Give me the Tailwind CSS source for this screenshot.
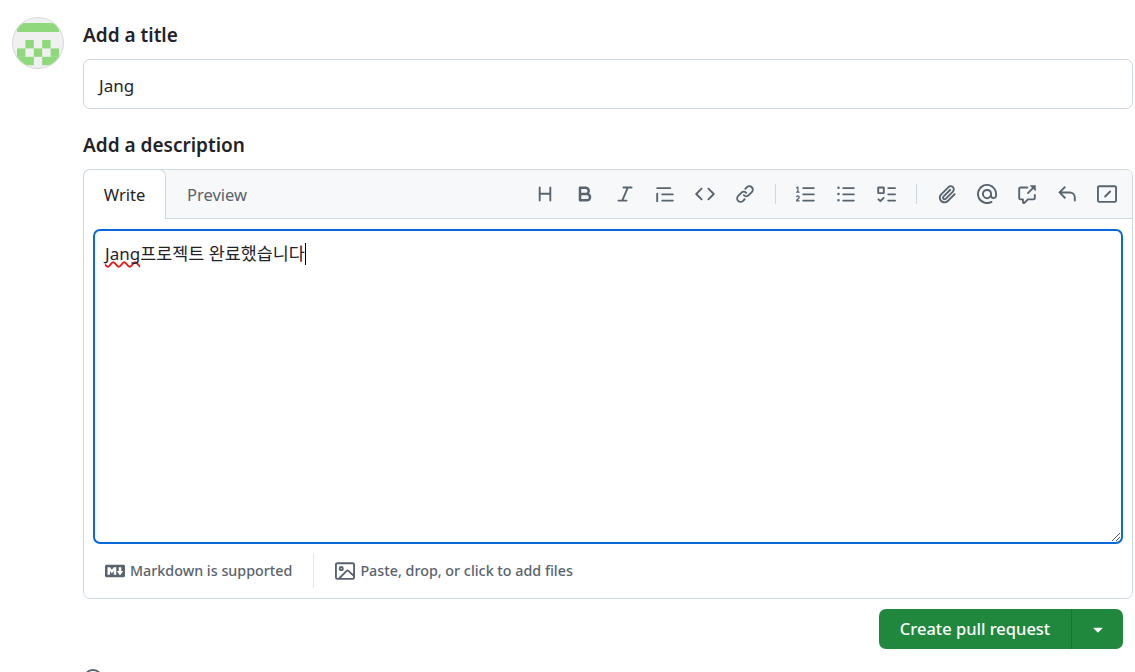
<!DOCTYPE html>
<html lang="en">
<head>
    <meta charset="UTF-8">
    <title>Open a pull request</title>
    <script src="https://cdn.jsdelivr.net/npm/@tailwindcss/browser@4"></script>
</head>
<body class="bg-white h-[672px] overflow-hidden text-[#1f2328] font-['Noto_Sans','Noto_Sans_CJK_KR',sans-serif]">
<div class="flex pl-3 pr-0.5 pt-[17px]">
    <!-- Avatar -->
    <div class="w-[52px] h-[52px] shrink-0 rounded-full border border-[#d9d9d9] bg-[#f0f0f0] overflow-hidden">
        <svg class="w-full h-full" viewBox="0 0 50 50" fill="#8fd97c">
            <rect x="4" y="5" width="42" height="9"/>
            <rect x="12.4" y="22" width="8.4" height="8.4"/>
            <rect x="29.2" y="22" width="8.4" height="8.4"/>
            <rect x="4" y="30.4" width="8.4" height="8.4"/>
            <rect x="20.8" y="30.4" width="8.4" height="8.4"/>
            <rect x="37.6" y="30.4" width="8.4" height="8.4"/>
            <rect x="4" y="38.8" width="16.8" height="8.4"/>
            <rect x="29.2" y="38.8" width="16.8" height="8.4"/>
        </svg>
    </div>

    <div class="ml-[19px] flex-1">
        <!-- Title -->
        <h2 class="text-[19px] leading-[36px] font-semibold">Add a title</h2>
        <div class="mt-[6px] h-[50px] border border-[#d1d9e0] rounded-[7px] px-[15px] pt-[3px] flex items-center text-[17px]">Jang</div>

        <!-- Description -->
        <h2 class="mt-[18px] text-[19px] leading-[36px] font-semibold">Add a description</h2>
        <div class="mt-1.5 h-[430px] border border-[#d1d9e0] rounded-[7px] flex flex-col">
            <div class="relative h-[49px] shrink-0 flex bg-[#f6f8fa] border-b border-[#d1d9e0] rounded-t-[7px]">
                <div class="w-[83px] h-[50px] -ml-px -mt-px pt-[2px] bg-white border border-[#d1d9e0] border-b-0 rounded-t-[7px] flex items-center justify-center text-[16.5px]">Write</div>
                <div class="w-[102px] pt-[2px] flex items-center justify-center text-[16.5px] text-[#59636e]">Preview</div>
                <!-- Toolbar -->
                <div class="ml-auto mr-[15px] flex items-center text-[#59636e]">
                    <svg class="w-5 h-5 mr-5" viewBox="0 0 16 16" fill="currentColor"><path d="M3.75 2a.75.75 0 0 1 .75.75V7h7V2.75a.75.75 0 0 1 1.5 0v10.5a.75.75 0 0 1-1.5 0V8.5h-7v4.75a.75.75 0 0 1-1.5 0V2.75A.75.75 0 0 1 3.75 2Z"/></svg>
                    <svg class="w-5 h-5 mr-5" viewBox="0 0 16 16" fill="currentColor"><path d="M4 2h4.5a3.501 3.501 0 0 1 2.852 5.53A3.499 3.499 0 0 1 9.5 14H4a1 1 0 0 1-1-1V3a1 1 0 0 1 1-1Zm1 7v3h4.5a1.5 1.5 0 0 0 0-3Zm3.5-2a1.5 1.5 0 0 0 0-3H5v3Z"/></svg>
                    <svg class="w-5 h-5 mr-5" viewBox="0 0 16 16" fill="currentColor"><path d="M6 2.75A.75.75 0 0 1 6.75 2h6.5a.75.75 0 0 1 0 1.5h-2.505l-3.858 9H9.25a.75.75 0 0 1 0 1.5h-6.5a.75.75 0 0 1 0-1.5h2.505l3.858-9H6.75A.75.75 0 0 1 6 2.75Z"/></svg>
                    <svg class="w-5 h-5 mr-5" viewBox="0 0 16 16" fill="currentColor"><path d="M1.75 2.5h10.5a.75.75 0 0 1 0 1.5H1.75a.75.75 0 0 1 0-1.5Zm4 5h8.5a.75.75 0 0 1 0 1.5h-8.5a.75.75 0 0 1 0-1.5Zm0 5h8.5a.75.75 0 0 1 0 1.5h-8.5a.75.75 0 0 1 0-1.5ZM2.5 7.75v6a.75.75 0 0 1-1.5 0v-6a.75.75 0 0 1 1.5 0Z"/></svg>
                    <svg class="w-5 h-5 mr-5" viewBox="0 0 16 16" fill="currentColor"><path d="m11.28 3.22 4.25 4.25a.75.75 0 0 1 0 1.06l-4.25 4.25a.749.749 0 0 1-1.275-.326.749.749 0 0 1 .215-.734L13.94 8l-3.72-3.72a.749.749 0 0 1 .326-1.275.749.749 0 0 1 .734.215Zm-6.56 0a.751.751 0 0 1 1.042.018.751.751 0 0 1 .018 1.042L2.06 8l3.72 3.72a.749.749 0 0 1-.326 1.275.749.749 0 0 1-.734-.215L.47 8.53a.75.75 0 0 1 0-1.06Z"/></svg>
                    <svg class="w-5 h-5" viewBox="0 0 16 16" fill="currentColor"><path d="m7.775 3.275 1.25-1.25a3.5 3.5 0 1 1 4.95 4.95l-2.5 2.5a3.5 3.5 0 0 1-4.95 0 .751.751 0 0 1 .018-1.042.751.751 0 0 1 1.042-.018 1.998 1.998 0 0 0 2.83 0l2.5-2.5a2.002 2.002 0 0 0-2.83-2.83l-1.25 1.25a.751.751 0 0 1-1.042-.018.751.751 0 0 1-.018-1.042Zm-4.69 9.64a1.998 1.998 0 0 0 2.83 0l1.25-1.25a.751.751 0 0 1 1.042.018.751.751 0 0 1 .018 1.042l-1.25 1.25a3.5 3.5 0 1 1-4.95-4.95l2.5-2.5a3.5 3.5 0 0 1 4.95 0 .751.751 0 0 1-.018 1.042.751.751 0 0 1-1.042.018 1.998 1.998 0 0 0-2.83 0l-2.5 2.5a1.998 1.998 0 0 0 0 2.83Z"/></svg>
                    <div class="w-px h-[20px] bg-[#d1d9e0] mx-[20px]"></div>
                    <svg class="w-5 h-5 mr-5" viewBox="0 0 16 16" fill="currentColor"><path d="M5 3.25a.75.75 0 0 1 .75-.75h8.5a.75.75 0 0 1 0 1.5h-8.5A.75.75 0 0 1 5 3.25Zm0 5a.75.75 0 0 1 .75-.75h8.5a.75.75 0 0 1 0 1.5h-8.5A.75.75 0 0 1 5 8.25Zm0 5a.75.75 0 0 1 .75-.75h8.5a.75.75 0 0 1 0 1.5h-8.5a.75.75 0 0 1-.75-.75ZM.924 10.32a.5.5 0 0 1-.851-.525l.001-.001.001-.002.002-.004.007-.011c.097-.144.215-.273.348-.384.228-.19.588-.392 1.068-.392.468 0 .858.181 1.126.484.259.294.377.673.377 1.038 0 .987-.686 1.495-1.156 1.845l-.047.035c-.303.225-.522.4-.654.597h1.357a.5.5 0 0 1 0 1H.5a.5.5 0 0 1-.5-.5c0-1.005.692-1.52 1.167-1.875l.035-.025c.531-.396.8-.625.8-1.078a.57.57 0 0 0-.128-.376C1.806 10.068 1.695 10 1.5 10a.658.658 0 0 0-.429.163.835.835 0 0 0-.144.153ZM2.003 2.5V6h.503a.5.5 0 0 1 0 1H.5a.5.5 0 0 1 0-1h.503V3.308l-.28.14a.5.5 0 0 1-.446-.895l1.003-.5a.5.5 0 0 1 .723.447Z"/></svg>
                    <svg class="w-5 h-5 mr-5" viewBox="0 0 16 16" fill="currentColor"><path d="M5.75 2.5h8.5a.75.75 0 0 1 0 1.5h-8.5a.75.75 0 0 1 0-1.5Zm0 5h8.5a.75.75 0 0 1 0 1.5h-8.5a.75.75 0 0 1 0-1.5Zm0 5h8.5a.75.75 0 0 1 0 1.5h-8.5a.75.75 0 0 1 0-1.5ZM2 14a1 1 0 1 1 0-2 1 1 0 0 1 0 2Zm1-6a1 1 0 1 1-2 0 1 1 0 0 1 2 0ZM2 4a1 1 0 1 1 0-2 1 1 0 0 1 0 2Z"/></svg>
                    <svg class="w-5 h-5" viewBox="0 0 16 16" fill="currentColor"><path d="M2 2h4a1 1 0 0 1 1 1v4a1 1 0 0 1-1 1H2a1 1 0 0 1-1-1V3a1 1 0 0 1 1-1Zm4.655 8.595a.75.75 0 0 1 0 1.06L4.03 14.28a.75.75 0 0 1-1.06 0l-1.5-1.5a.749.749 0 0 1 .326-1.275.749.749 0 0 1 .734.215l.97.97 2.095-2.095a.75.75 0 0 1 1.06 0ZM9.75 2.5h5.5a.75.75 0 0 1 0 1.5h-5.5a.75.75 0 0 1 0-1.5Zm0 5h5.5a.75.75 0 0 1 0 1.5h-5.5a.75.75 0 0 1 0-1.5Zm0 5h5.5a.75.75 0 0 1 0 1.5h-5.5a.75.75 0 0 1 0-1.5Zm-7.25-9v3h3v-3Z"/></svg>
                    <div class="w-px h-[20px] bg-[#d1d9e0] mx-[20px]"></div>
                    <svg class="w-5 h-5 mr-5" viewBox="0 0 16 16" fill="currentColor"><path d="M12.212 3.02a1.753 1.753 0 0 0-2.478.003l-5.83 5.83a3.007 3.007 0 0 0-.88 2.127c0 .795.315 1.551.88 2.116.567.567 1.333.89 2.126.89.79 0 1.548-.321 2.116-.89l5.48-5.48a.75.75 0 0 1 1.061 1.06l-5.48 5.48a4.492 4.492 0 0 1-3.177 1.33c-1.2 0-2.345-.487-3.187-1.33a4.483 4.483 0 0 1-1.32-3.177c0-1.195.475-2.341 1.32-3.186l5.83-5.83a3.25 3.25 0 0 1 5.553 2.297c0 .863-.343 1.691-.953 2.301L7.439 12.39c-.375.377-.884.59-1.416.593a1.998 1.998 0 0 1-1.412-.593 1.992 1.992 0 0 1 0-2.828l5.48-5.48a.751.751 0 0 1 1.042.018.751.751 0 0 1 .018 1.042l-5.48 5.48a.492.492 0 0 0 0 .707.499.499 0 0 0 .352.154.51.51 0 0 0 .356-.154l5.833-5.827a1.755 1.755 0 0 0 0-2.481Z"/></svg>
                    <svg class="w-5 h-5 mr-5" viewBox="0 0 16 16" fill="currentColor"><path d="M4.75 2.37a6.501 6.501 0 0 0 6.5 11.26.75.75 0 0 1 .75 1.298A7.999 7.999 0 0 1 .989 4.148 8 8 0 0 1 16 7.75v1.5a2.75 2.75 0 0 1-5.072 1.475 3.999 3.999 0 0 1-6.65-4.19A4 4 0 0 1 12 8v1.25a1.25 1.25 0 0 0 2.5 0V7.867a6.5 6.5 0 0 0-9.75-5.496ZM10.5 8a2.5 2.5 0 1 0-5 0 2.5 2.5 0 0 0 5 0Z"/></svg>
                    <svg class="w-5 h-5 mr-5" viewBox="0 0 16 16" fill="currentColor"><path d="M2.75 3.5a.25.25 0 0 0-.25.25v7.5c0 .138.112.25.25.25h2a.75.75 0 0 1 .75.75v2.19l2.72-2.72a.749.749 0 0 1 .53-.22h4.5a.25.25 0 0 0 .25-.25v-2.5a.75.75 0 0 1 1.5 0v2.5A1.75 1.75 0 0 1 13.25 13H9.06l-2.573 2.573A1.458 1.458 0 0 1 4 14.543V13H2.75A1.75 1.75 0 0 1 1 11.25v-7.5C1 2.784 1.784 2 2.75 2h5.5a.75.75 0 0 1 0 1.5ZM10.604 1h4.146a.25.25 0 0 1 .25.25v4.146a.25.25 0 0 1-.427.177L13.03 4.03 9.28 7.78a.751.751 0 0 1-1.042-.018.751.751 0 0 1-.018-1.042l3.75-3.75-1.543-1.543A.25.25 0 0 1 10.604 1Z"/></svg>
                    <svg class="w-5 h-5 mr-5" viewBox="0 0 16 16" fill="currentColor"><path d="M6.78 1.97a.75.75 0 0 1 0 1.06L3.81 6h6.44A4.75 4.75 0 0 1 15 10.75v2.5a.75.75 0 0 1-1.5 0v-2.5a3.25 3.25 0 0 0-3.25-3.25H3.81l2.97 2.97a.749.749 0 0 1-.326 1.275.749.749 0 0 1-.734-.215L1.47 7.28a.75.75 0 0 1 0-1.06l4.25-4.25a.75.75 0 0 1 1.06 0Z"/></svg>
                    <svg class="w-5 h-5" viewBox="0 0 16 16" fill="currentColor"><path d="M1.75 1h12.5c.966 0 1.75.784 1.75 1.75v10.5A1.75 1.75 0 0 1 14.25 15H1.75A1.75 1.75 0 0 1 0 13.25V2.75C0 1.784.784 1 1.75 1ZM1.5 2.75v10.5c0 .138.112.25.25.25h12.5a.25.25 0 0 0 .25-.25V2.75a.25.25 0 0 0-.25-.25H1.75a.25.25 0 0 0-.25.25Z"/><path d="M9.97 5.47a.75.75 0 0 1 1.06 1.06l-4 4a.75.75 0 0 1-1.06-1.06Z"/></svg>
                </div>
            </div>

            <!-- Editor -->
            <div class="relative ml-[9px] mr-[9px] mt-[10px] h-[315px] border-2 border-[#0969da] rounded-[7px] pl-[10px] pr-[9px] py-[10px] text-[17px] leading-[25px]">
                <span class="underline decoration-wavy decoration-[#e02020] decoration-[1.5px] [text-decoration-skip-ink:none]">Jang</span><span class="text-[17.4px]">프로젝트 완료했습니다</span><span class="inline-block w-px h-[22px] bg-black align-[-5px]"></span>
                <svg class="absolute right-0 bottom-0 w-3 h-3" viewBox="0 0 12 12" stroke="#555" fill="none"><path d="M11 3 3 11M11 7 7 11"/></svg>
            </div>

            <!-- Editor footer -->
            <div class="flex items-center h-[35px] mt-[9px] text-[14.3px] text-[#59636e]">
                <div class="flex items-center pl-[21px] pr-[21px] h-full font-medium">
                    <svg class="w-5 h-5 mr-[5px]" viewBox="0 0 16 16" fill="currentColor"><path d="M14.85 3c.63 0 1.15.52 1.14 1.15v7.7c0 .63-.51 1.15-1.15 1.15H1.15C.52 13 0 12.48 0 11.84V4.15C0 3.52.52 3 1.15 3ZM9 11V5H7L5.5 7 4 5H2v6h2V8l1.5 1.92L7 8v3Zm2.99.5L14.5 8H13V5h-2v3H9.5Z"/></svg>
                    <span>Markdown is supported</span>
                </div>
                <div class="w-px h-full bg-[#e6e9ed]"></div>
                <div class="flex items-center pl-[21px] h-full font-medium">
                    <svg class="w-5 h-5 mr-[5px]" viewBox="0 0 16 16" fill="currentColor"><path d="M16 13.25A1.75 1.75 0 0 1 14.25 15H1.75A1.75 1.75 0 0 1 0 13.25V2.75C0 1.784.784 1 1.75 1h12.5c.966 0 1.75.784 1.75 1.75ZM1.75 2.5a.25.25 0 0 0-.25.25v10.5c0 .138.112.25.25.25h.94l.03-.03 6.077-6.078a1.75 1.75 0 0 1 2.412-.06L14.5 10.31V2.75a.25.25 0 0 0-.25-.25Zm12.5 11a.25.25 0 0 0 .25-.25v-.917l-4.298-3.889a.25.25 0 0 0-.344.009L4.81 13.5ZM7 6a2 2 0 1 1-3.999.001A2 2 0 0 1 7 6ZM5.5 6a.5.5 0 1 0-1 0 .5.5 0 0 0 1 0Z"/></svg>
                    <span>Paste, drop, or click to add files</span>
                </div>
            </div>
        </div>

        <!-- Submit -->
        <div class="flex justify-end mt-2.5 mr-[10px]">
            <div class="flex h-10 w-[244px] rounded-[7px] bg-[#1f883d] text-white text-[16.5px] font-medium">
                <div class="flex-1 flex items-center justify-center border-r border-[#1a7534]">Create pull request</div>
                <div class="w-[51px] flex items-center justify-center">
                    <svg class="w-5 h-5" viewBox="0 0 16 16" fill="currentColor"><path d="m4.427 7.427 3.396 3.396a.25.25 0 0 0 .354 0l3.396-3.396A.25.25 0 0 0 11.396 7H4.604a.25.25 0 0 0-.177.427Z"/></svg>
                </div>
            </div>
        </div>

        <!-- Helper text icon, cut off by the window -->
        <svg class="w-5 h-5 ml-0 mt-5 text-[#59636e]" viewBox="0 0 16 16" fill="currentColor"><path d="M0 8a8 8 0 1 1 16 0A8 8 0 0 1 0 8Zm8-6.5a6.5 6.5 0 1 0 0 13 6.5 6.5 0 0 0 0-13Z"/></svg>
    </div>
</div>
</body>
</html>
